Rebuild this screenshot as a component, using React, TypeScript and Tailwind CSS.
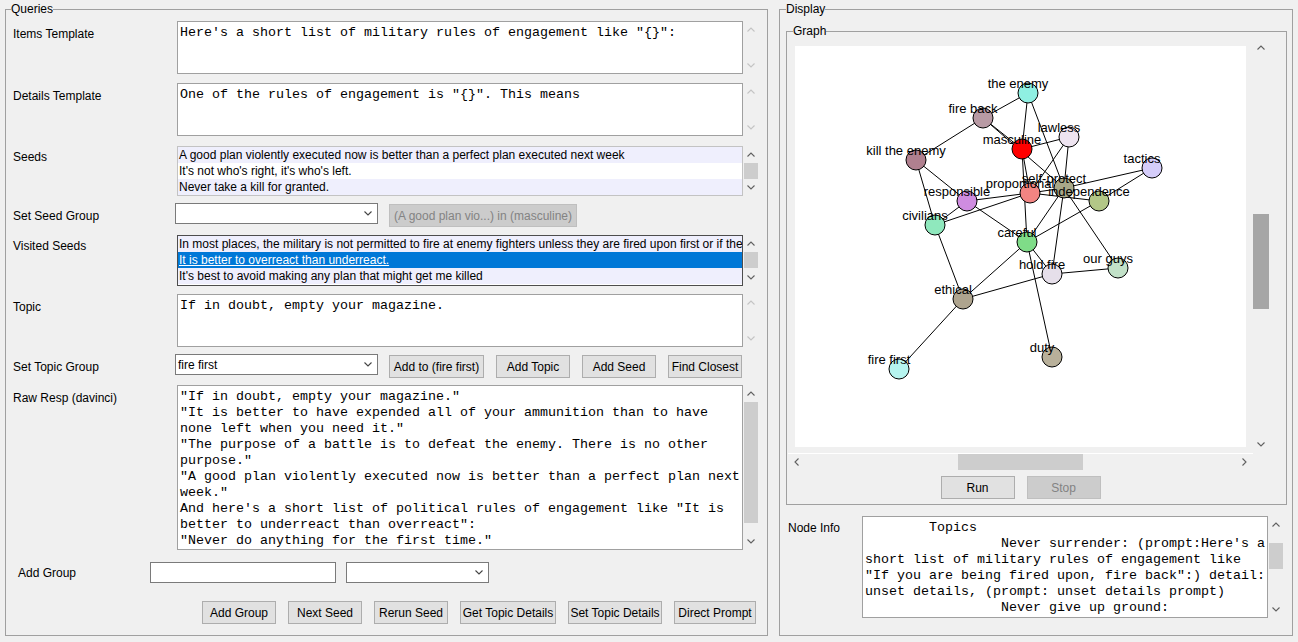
import React from 'react';

const ui = "font-['Liberation_Sans',Arial,sans-serif]";
const mono = "font-['Liberation_Mono','Courier_New',monospace]";

type Dir = 'up' | 'down' | 'left' | 'right';

function Chevron({ dir, color }: { dir: Dir; color: string }) {
  const vertical = dir === 'up' || dir === 'down';
  const pts = {
    up: '0.5,4.5 4,1 7.5,4.5',
    down: '0.5,0.5 4,4 7.5,0.5',
    left: '4.5,0.5 1,4 4.5,7.5',
    right: '0.5,0.5 4,4 0.5,7.5',
  }[dir];
  return (
    <svg width={vertical ? 8 : 5} height={vertical ? 5 : 8} viewBox={vertical ? '0 0 8 5' : '0 0 5 8'}>
      <polyline points={pts} fill="none" stroke={color} strokeWidth="1.1" />
    </svg>
  );
}

function VScroll({ className = '', thumb, disabled = false }: { className?: string; thumb?: string; disabled?: boolean }) {
  const c = disabled ? '#c4c4c4' : '#606060';
  return (
    <div className={`w-[16px] flex flex-col shrink-0 ${className}`}>
      <div className="h-[17px] shrink-0 flex items-center justify-center">
        <Chevron dir="up" color={c} />
      </div>
      <div className="flex-1 min-h-0">{thumb && <div className={thumb} />}</div>
      <div className="h-[17px] shrink-0 flex items-center justify-center">
        <Chevron dir="down" color={c} />
      </div>
    </div>
  );
}

function TextBox({ lines, className = '' }: { lines: string[]; className?: string }) {
  return (
    <div
      className={`bg-white border border-[#a0a0a0] pl-[2px] pt-[3px] overflow-hidden whitespace-pre ${mono} text-[13.33px] leading-[16px] shrink-0 ${className}`}
    >
      {lines.map((l, i) => (
        <div key={i}>{l}</div>
      ))}
    </div>
  );
}

function ListBox({ items, selected = -1, className = '' }: { items: string[]; selected?: number; className?: string }) {
  return (
    <div className={`bg-white border overflow-hidden shrink-0 ${className}`}>
      {items.map((t, i) => (
        <div
          key={i}
          className={`h-[16px] leading-[17px] pl-[1px] whitespace-nowrap ${
            i === selected ? 'bg-[#0078d7] text-white underline' : i % 2 === 0 ? 'bg-[#efeffd]' : 'bg-white'
          }`}
        >
          {t}
        </div>
      ))}
    </div>
  );
}

function Combo({ value = '', className = '' }: { value?: string; className?: string }) {
  return (
    <div className={`h-[21px] bg-white border border-[#7a7a7a] flex items-center pl-[2px] pr-[5px] shrink-0 ${className}`}>
      <span className="flex-1">{value}</span>
      <Chevron dir="down" color="#444444" />
    </div>
  );
}

function Btn({ children, className = '', disabled = false }: { children: React.ReactNode; className?: string; disabled?: boolean }) {
  return (
    <button
      type="button"
      className={`h-[23px] border flex items-center justify-center shrink-0 whitespace-nowrap ${
        disabled ? 'bg-[#cccccc] border-[#bfbfbf] text-[#838383]' : 'bg-[#e1e1e1] border-[#adadad] text-black'
      } ${className}`}
    >
      {children}
    </button>
  );
}

const nodes: Record<string, [number, number, string]> = {
  'the enemy': [233, 47, '#8ff0e2'],
  'fire back': [188, 72, '#b89aa4'],
  masculine: [227, 103, '#ff0000'],
  lawless: [274, 91, '#eee4f0'],
  'kill the enemy': [121, 114, '#b0808f'],
  tactics: [357, 122, '#d5cdfa'],
  'self-protect': [269, 142, '#a8a888'],
  proportional: [235, 147, '#f28482'],
  independence: [304, 155, '#b3c787'],
  responsible: [172, 155, '#cf8ce0'],
  civilians: [140, 179, '#8fe8bd'],
  careful: [232, 196, '#7fdc88'],
  'hold fire': [257, 228, '#e6dfea'],
  'our guys': [323, 222, '#c2e1c8'],
  ethical: [168, 253, '#aea48e'],
  'fire first': [104, 323, '#b6f4ef'],
  duty: [257, 311, '#b8b09a'],
};

const edges: [string, string][] = [
  ['the enemy', 'fire back'],
  ['the enemy', 'masculine'],
  ['the enemy', 'self-protect'],
  ['fire back', 'masculine'],
  ['fire back', 'self-protect'],
  ['fire back', 'kill the enemy'],
  ['masculine', 'lawless'],
  ['masculine', 'proportional'],
  ['masculine', 'careful'],
  ['lawless', 'self-protect'],
  ['lawless', 'proportional'],
  ['tactics', 'self-protect'],
  ['tactics', 'independence'],
  ['self-protect', 'proportional'],
  ['self-protect', 'careful'],
  ['self-protect', 'hold fire'],
  ['self-protect', 'our guys'],
  ['proportional', 'independence'],
  ['proportional', 'responsible'],
  ['proportional', 'civilians'],
  ['responsible', 'kill the enemy'],
  ['responsible', 'civilians'],
  ['responsible', 'careful'],
  ['kill the enemy', 'civilians'],
  ['civilians', 'ethical'],
  ['careful', 'independence'],
  ['careful', 'ethical'],
  ['careful', 'hold fire'],
  ['careful', 'duty'],
  ['ethical', 'hold fire'],
  ['ethical', 'fire first'],
  ['hold fire', 'our guys'],
];

function Graph() {
  return (
    <svg width="451" height="401" viewBox="0 0 451 401">
      {edges.map(([a, b], i) => (
        <line key={i} x1={nodes[a][0]} y1={nodes[a][1]} x2={nodes[b][0]} y2={nodes[b][1]} stroke="#000" strokeWidth="1" />
      ))}
      {Object.entries(nodes).map(([name, [x, y, c]]) => (
        <circle key={name} cx={x} cy={y} r="10" fill={c} stroke="#000" strokeWidth="1" />
      ))}
      {Object.entries(nodes).map(([name, [x, y]]) => (
        <text
          key={name}
          x={x - 10}
          y={y - 5}
          textAnchor="middle"
          fontSize="13"
          fill="#000"
          fontFamily="'Liberation Sans', Arial, sans-serif"
        >
          {name}
        </text>
      ))}
    </svg>
  );
}

function Queries() {
  return (
    <fieldset className="ml-[5px] mt-[2px] w-[763px] h-[634px] border border-[#a0a0a0] p-0 m-0 min-w-0 shrink-0">
      <legend className="ml-[5px] px-0 leading-[14px]">Queries</legend>
      <div className="pl-[7px] flex flex-col">
        <div className="mt-[5px] h-[53px] flex">
          <div className="w-[164px] pt-[6px] shrink-0">Items Template</div>
          <TextBox className="w-[566px] h-full" lines={[`Here's a short list of military rules of engagement like "{}":`]} />
          <VScroll className="h-full" disabled />
        </div>

        <div className="mt-[9px] h-[53px] flex">
          <div className="w-[164px] pt-[6px] shrink-0">Details Template</div>
          <TextBox className="w-[566px] h-full" lines={[`One of the rules of engagement is "{}". This means`]} />
          <VScroll className="h-full" disabled />
        </div>

        <div className="mt-[10px] h-[50px] flex">
          <div className="w-[164px] pt-[4px] shrink-0">Seeds</div>
          <ListBox
            className="w-[566px] h-full border-[#c3c3c3]"
            items={[
              'A good plan violently executed now is better than a perfect plan executed next week',
              "It's not who's right, it's who's left.",
              'Never take a kill for granted.',
            ]}
          />
          <VScroll className="h-full" thumb="mx-[1px] h-[16px] bg-[#cdcdcd]" />
        </div>

        <div className="mt-[7px] h-[24px] flex items-start">
          <div className="w-[164px] pt-[6px] shrink-0">Set Seed Group</div>
          <Combo className="-ml-[2px] w-[203px]" />
          <Btn className="ml-[11px] mt-[1px] w-[188px]" disabled>
            (A good plan vio...) in (masculine)
          </Btn>
        </div>

        <div className="mt-[8px] h-[51px] flex">
          <div className="w-[164px] pt-[4px] shrink-0">Visited Seeds</div>
          <ListBox
            className="w-[566px] h-full border-[#4d4d4d]"
            selected={1}
            items={[
              'In most places, the military is not permitted to fire at enemy fighters unless they are fired upon first or if they are in danger',
              'It is better to overreact than underreact.',
              "It's best to avoid making any plan that might get me killed",
            ]}
          />
          <VScroll className="h-full" thumb="mx-[1px] h-[16px] bg-[#cdcdcd]" />
        </div>

        <div className="mt-[8px] h-[53px] flex">
          <div className="w-[164px] pt-[6px] shrink-0">Topic</div>
          <TextBox className="w-[566px] h-full" lines={['If in doubt, empty your magazine.']} />
          <VScroll className="h-full" disabled />
        </div>

        <div className="mt-[7px] h-[24px] flex items-start">
          <div className="w-[164px] pt-[6px] shrink-0">Set Topic Group</div>
          <Combo className="-ml-[2px] w-[203px]" value="fire first" />
          <Btn className="ml-[11px] mt-[1px] w-[95px]">Add to (fire first)</Btn>
          <Btn className="ml-[12px] mt-[1px] w-[74px]">Add Topic</Btn>
          <Btn className="ml-[12px] mt-[1px] w-[74px]">Add Seed</Btn>
          <Btn className="ml-[12px] mt-[1px] w-[74px]">Find Closest</Btn>
        </div>

        <div className="mt-[7px] h-[165px] flex">
          <div className="w-[164px] pt-[6px] shrink-0">Raw Resp (davinci)</div>
          <TextBox
            className="w-[566px] h-full"
            lines={[
              '"If in doubt, empty your magazine."',
              '"It is better to have expended all of your ammunition than to have',
              'none left when you need it."',
              '"The purpose of a battle is to defeat the enemy. There is no other',
              'purpose."',
              '"A good plan violently executed now is better than a perfect plan next',
              'week."',
              `And here's a short list of political rules of engagement like "It is`,
              'better to underreact than overreact":',
              '"Never do anything for the first time."',
            ]}
          />
          <VScroll className="h-full" thumb="mx-[1px] h-[121px] bg-[#cdcdcd]" />
        </div>

        <div className="mt-[12px] h-[21px] flex">
          <div className="w-[137px] pl-[5px] pt-[4px] shrink-0">Add Group</div>
          <div className="w-[186px] h-full bg-white border border-[#7a7a7a] shrink-0" />
          <Combo className="ml-[10px] w-[143px]" />
        </div>

        <div className="mt-[18px] flex gap-[12px] pl-[189px]">
          <Btn className="w-[74px]">Add Group</Btn>
          <Btn className="w-[74px]">Next Seed</Btn>
          <Btn className="w-[74px]">Rerun Seed</Btn>
          <Btn className="w-[96px]">Get Topic Details</Btn>
          <Btn className="w-[94px]">Set Topic Details</Btn>
          <Btn className="w-[82px]">Direct Prompt</Btn>
        </div>
      </div>
    </fieldset>
  );
}

function Display() {
  return (
    <fieldset className="ml-[11px] mt-[2px] w-[514px] h-[634px] border border-[#a0a0a0] p-0 m-0 min-w-0 shrink-0">
      <legend className="ml-[6px] px-0 leading-[14px]">Display</legend>

      <fieldset className="ml-[6px] mt-[8px] w-[501px] border border-[#a0a0a0] p-0 pb-[5px] min-w-0">
        <legend className="ml-[6px] px-0 leading-[14px]">Graph</legend>
        <div className="mt-[1px] ml-[1px] flex">
          <div className="w-[465px] h-[414px] pl-[7px] pt-[7px] shrink-0">
            <div className="w-[451px] h-[401px] bg-white">
              <Graph />
            </div>
          </div>
          <VScroll className="h-[414px]" thumb="mt-[158px] h-[95px] bg-[#a6a6a6]" />
        </div>
        <div className="ml-[1px] w-[465px] h-[17px] flex border-t border-white">
          <div className="w-[17px] flex items-center justify-center shrink-0">
            <Chevron dir="left" color="#606060" />
          </div>
          <div className="flex-1">
            <div className="ml-[153px] w-[125px] h-full bg-[#cdcdcd]" />
          </div>
          <div className="w-[17px] flex items-center justify-center shrink-0">
            <Chevron dir="right" color="#606060" />
          </div>
        </div>
        <div className="ml-[1px] w-[465px] mt-[6px] flex justify-center gap-[12px]">
          <Btn className="w-[74px]">Run</Btn>
          <Btn className="w-[74px]" disabled>
            Stop
          </Btn>
        </div>
      </fieldset>

      <div className="mt-[11px] flex">
        <div className="w-[82px] pl-[8px] pt-[5px] shrink-0">Node Info</div>
        <TextBox
          className="w-[406px] h-[102px]"
          lines={[
            '        Topics',
            `                 Never surrender: (prompt:Here's a`,
            'short list of military rules of engagement like',
            '"If you are being fired upon, fire back":) detail:',
            'unset details, (prompt: unset details prompt)',
            '                 Never give up ground:',
          ]}
        />
        <VScroll className="h-[102px]" thumb="mt-[10px] mx-[1px] h-[26px] bg-[#cdcdcd]" />
      </div>
    </fieldset>
  );
}

export default function App() {
  return (
    <div className={`w-[1298px] h-[642px] bg-[#f0f0f0] flex items-start overflow-hidden ${ui} text-[12px] leading-[14px] text-black`}>
      <Queries />
      <Display />
    </div>
  );
}
